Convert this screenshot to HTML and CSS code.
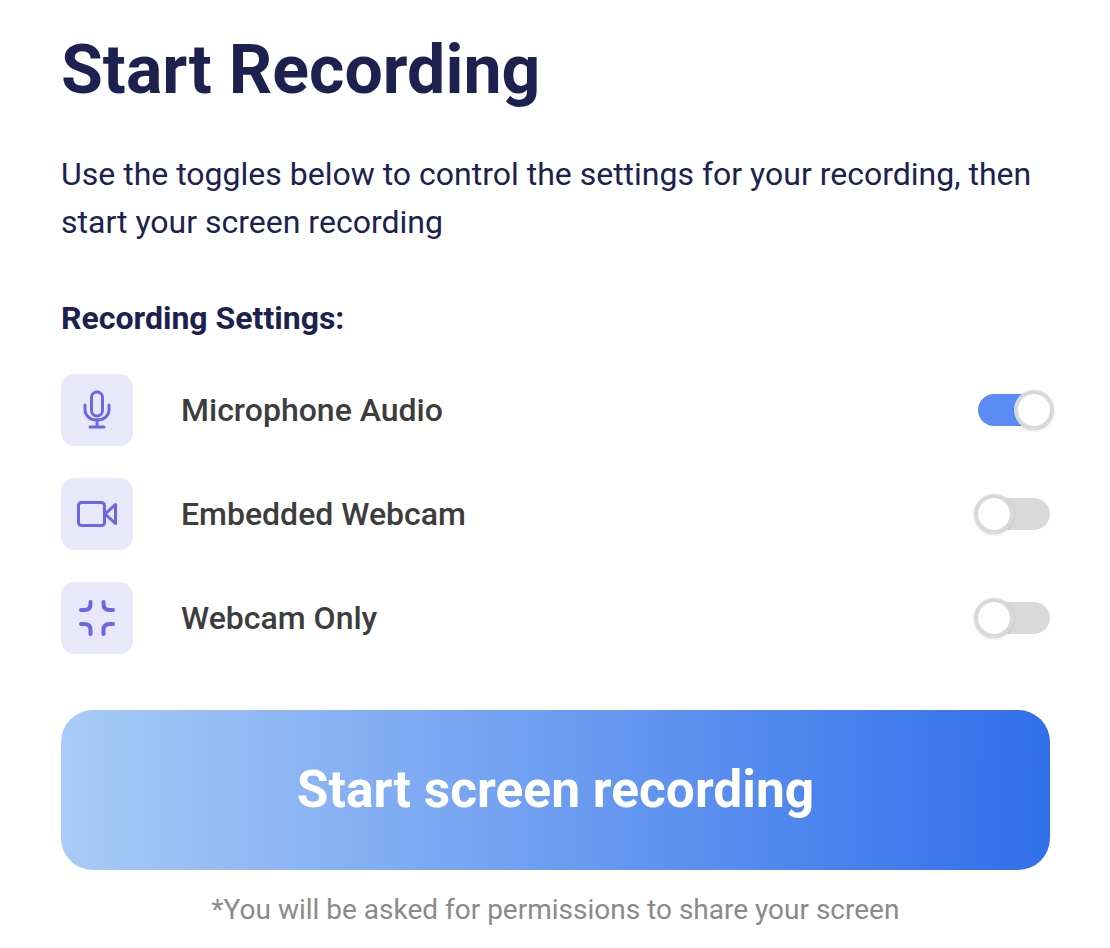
FILE: index.html
```html
<!DOCTYPE html>
<html lang="en">
<head>
  <meta charset="UTF-8" />
  <meta name="viewport" content="width=device-width, initial-scale=1.0"/>
  <title>Start Recording</title>
  <link rel="stylesheet" href="styles.css">
</head>
<body>
  <div class="panel">
    <h1 class="title">Start Recording</h1>
    <p class="intro">Use the toggles below to control the settings for your recording, then start your screen recording</p>
    <h2 class="settings-title">Recording Settings:</h2>

    <div class="setting-list">
      <div class="setting">
        <div class="setting-icon">
          <svg width="32" height="40" viewBox="0 0 32 40" fill="none" stroke="#6a66e6" stroke-width="3" stroke-linecap="round" stroke-linejoin="round">
            <rect x="10.5" y="2" width="11" height="24" rx="5.5"/>
            <path d="M4 15v4c0 7 5 11 12 11s12-4 12-11v-4"/>
            <path d="M16 30v6"/>
            <path d="M9 37h14"/>
          </svg>
        </div>
        <span class="setting-label">Microphone Audio</span>
        <div class="toggle on"><div class="knob"></div></div>
      </div>

      <div class="setting">
        <div class="setting-icon">
          <svg width="40" height="26" viewBox="0 0 40 26" fill="none" stroke="#6a66e6" stroke-width="3" stroke-linejoin="round">
            <rect x="1.5" y="1.5" width="26" height="23" rx="3"/>
            <path d="M38.5 3.5v19L28 13z"/>
          </svg>
        </div>
        <span class="setting-label">Embedded Webcam</span>
        <div class="toggle"><div class="knob"></div></div>
      </div>

      <div class="setting">
        <div class="setting-icon">
          <svg width="40" height="40" viewBox="0 0 40 40" fill="none" stroke="#6a66e6" stroke-width="4" stroke-linecap="round" stroke-linejoin="round">
            <path d="M13.5 4v2c0 4-2 6-6 6H4"/>
            <path d="M26.5 4v2c0 4 2 6 6 6H36"/>
            <path d="M4 26h3.500c4 0 6 2 6 6v4"/>
            <path d="M36 26h-3.500c-4 0-6 2-6 6v4"/>
          </svg>
        </div>
        <span class="setting-label">Webcam Only</span>
        <div class="toggle"><div class="knob"></div></div>
      </div>
    </div>

    <button class="start-btn">Start screen recording</button>
    <p class="note">*You will be asked for permissions to share your screen</p>
  </div>
</body>
</html>
```

FILE: styles.css
```css
body {
  margin: 0;
  background-color: #fff;
  font-family: Roboto, "Liberation Sans", sans-serif;
}
.panel {
  width: 989px;
  margin-left: 61px;
  padding-top: 28px;
}
.title {
  margin: 0;
  font-size: 68px;
  line-height: 84px;
  font-weight: 700;
  color: #1c2150;
}
.intro {
  margin: 38px 0 0;
  font-size: 32px;
  line-height: 48px;
  color: #1c2150;
}
.settings-title {
  margin: 52px 0 0;
  font-size: 32px;
  line-height: 40px;
  font-weight: 700;
  color: #1c2150;
}
.setting-list {
  display: flex;
  flex-direction: column;
  gap: 32px;
  margin-top: 36px;
}
.setting {
  display: flex;
  align-items: center;
}
.setting-icon {
  width: 72px;
  height: 72px;
  border-radius: 14px;
  background-color: #e9e8fa;
  display: flex;
  align-items: center;
  justify-content: center;
}
.setting-label {
  margin-left: 48px;
  flex-grow: 1;
  font-size: 32px;
  font-weight: 500;
  color: #3d3d3d;
}
.toggle {
  position: relative;
  width: 72px;
  height: 32px;
  border-radius: 16px;
  background-color: #d9d9d9;
}
.toggle.on {
  background-color: #5b8cf5;
}
.knob {
  position: absolute;
  top: -4px;
  left: -4px;
  width: 32px;
  height: 32px;
  border: 4px solid #d9d9d9;
  border-radius: 50%;
  background-color: #fff;
  box-shadow: 0 1px 3px rgba(0,0,0,0.12);
}
.toggle.on .knob {
  left: 36px;
}
.start-btn {
  display: block;
  width: 100%;
  height: 160px;
  margin-top: 56px;
  padding: 0 0 2px;
  border: 0;
  border-radius: 32px;
  background: linear-gradient(90deg, #a9cbf6 0%, #306feb 100%);
  color: #fff;
  font-family: inherit;
  font-size: 51.5px;
  font-weight: 700;
}
.note {
  margin: 22px 0 0;
  text-align: center;
  font-size: 28px;
  line-height: 36px;
  color: #8a8a8a;
}
```
